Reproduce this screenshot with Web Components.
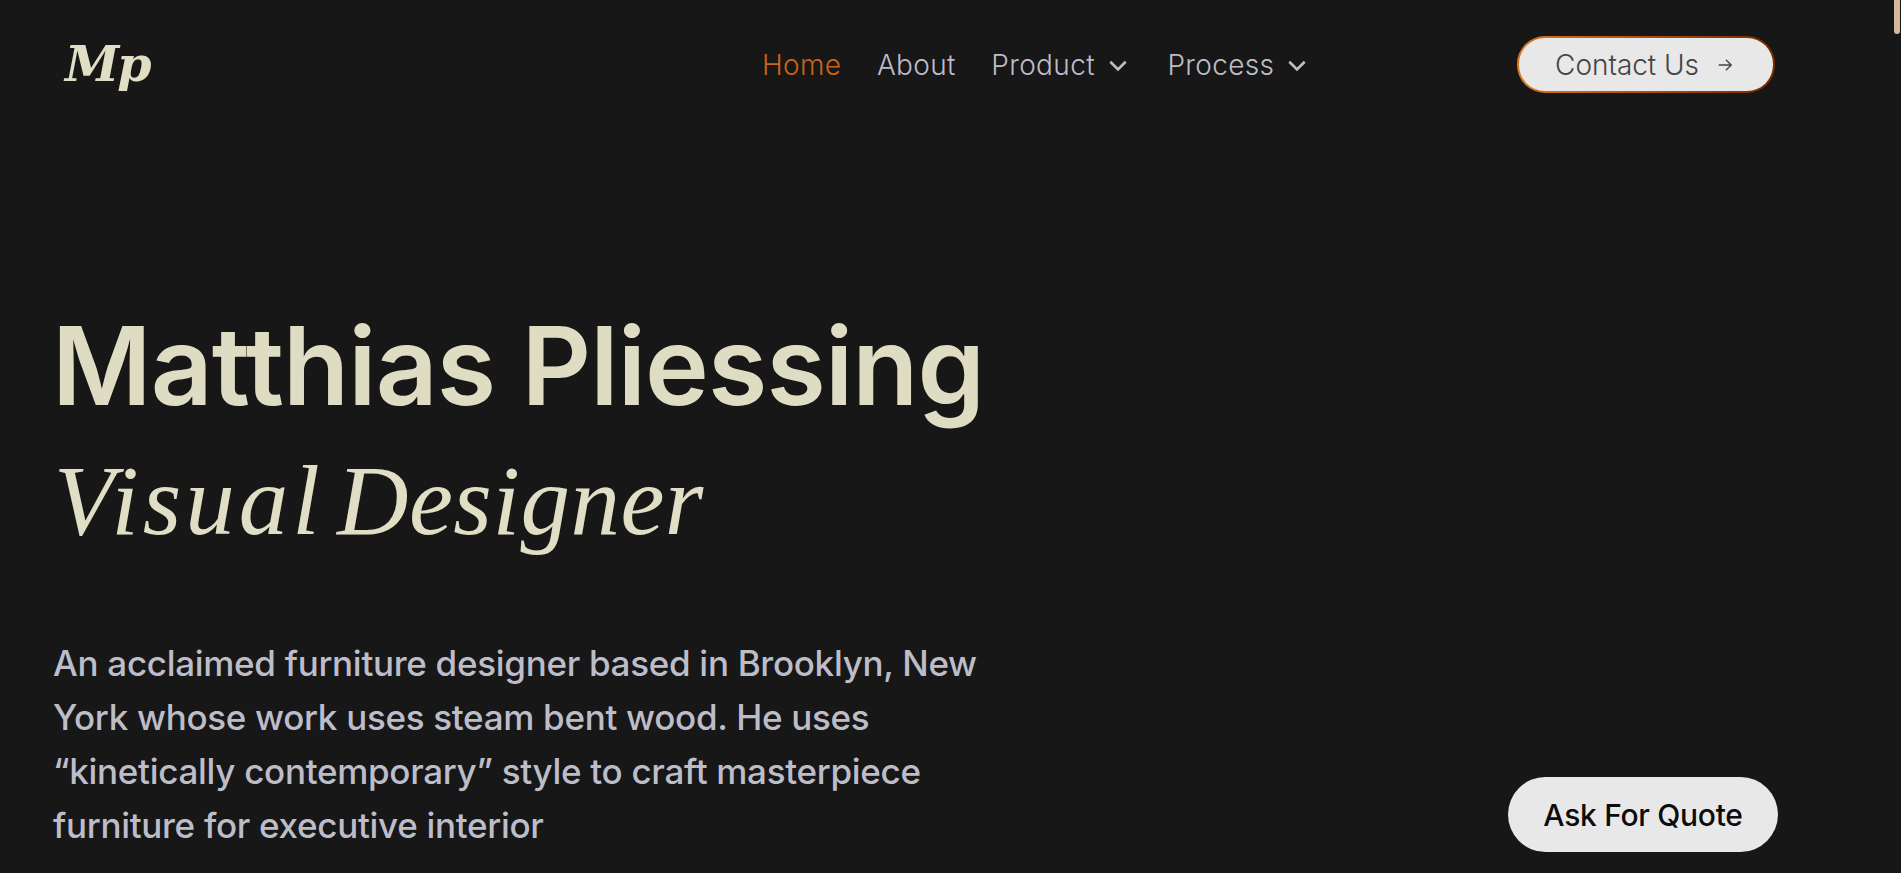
<!DOCTYPE html>
<html><head><meta charset="utf-8"><style>
html,body{margin:0;background:#171717;height:873px;overflow:hidden}
body{font-family:Inter,"Liberation Sans",sans-serif}
</style></head><body>
<hero-page></hero-page>
<script>
function def(name,html){customElements.define(name,class extends HTMLElement{constructor(){super();this.attachShadow({mode:'open'}).innerHTML=html}})}
def('site-nav',`<style>
:host{display:grid;grid-template-columns:697px 1fr auto;align-items:center;height:129px;padding:0 126px 0 65px;box-sizing:border-box}
.logo{font:italic 700 49px/1 "DejaVu Serif",serif;color:#e0dec4;letter-spacing:-2px}
nav{display:flex;gap:35.5px;align-items:center;font:300 28px Inter,sans-serif;letter-spacing:.35px;color:#bdbdca}
nav span{display:flex;align-items:center;gap:12px}
nav span svg{margin-right:3px}
.on{color:#c8641a}
svg{width:22px;height:22px;fill:none;stroke:currentColor;stroke-width:2.4}
a{display:flex;align-items:center;justify-content:center;gap:18px;width:258px;height:57px;box-sizing:border-box;border:2px solid transparent;border-radius:28px;background:linear-gradient(#e8e8e8,#e8e8e8) padding-box,linear-gradient(90deg,#d9781f,#7a2a00) border-box;color:#444;font:300 28px Inter,sans-serif;letter-spacing:-.05px}
a svg{width:16px;height:16px;stroke-width:1.5;margin-right:4px}
</style><div class="logo">Mp</div><nav><span class="on">Home</span><span>About</span><span>Product<svg viewBox="0 0 20 20"><path d="M3 7l7 7 7-7"/></svg></span><span>Process<svg viewBox="0 0 20 20"><path d="M3 7l7 7 7-7"/></svg></span></nav><a>Contact Us<svg viewBox="0 0 18 18"><path d="M2 9h14M10 3l6 6-6 6"/></svg></a>`);
def('hero-page',`<style>
:host{display:block;position:relative;height:873px}
main{padding:172px 0 0 53px}
h1{margin:0 0 0 -1px;font:600 108px/1.2 Inter,sans-serif;letter-spacing:-.9px;color:#dedcc2}
h2{margin:11px 0 0 1px;font:italic 400 99px/1.2 "Liberation Serif",serif;letter-spacing:.5px;word-spacing:-12px;color:#e0dec4}
h2 span{letter-spacing:4px}
p{margin:76px 0 0;width:960px;font:500 35px/54px Inter,sans-serif;letter-spacing:-.3px;color:#bdbdca}
button{position:absolute;right:123px;bottom:21px;width:270px;height:75px;border:0;border-radius:38px;background:#e8e8e8;color:#0c0c0c;font:500 30px Inter,sans-serif;letter-spacing:-.3px}
i{position:absolute;top:0;right:1px;width:6px;height:34px;background:#d4b8a0;border-radius:0 0 3px 3px}
</style><site-nav></site-nav><main><h1>Matthias Pliessing</h1><h2><span>Visual</span> Designer</h2><p>An acclaimed furniture designer based in Brooklyn, New York whose work uses steam bent wood. He uses “kinetically contemporary” style to craft masterpiece furniture for executive interior</p></main><button>Ask For Quote</button><i></i>`);
</script></body></html>
